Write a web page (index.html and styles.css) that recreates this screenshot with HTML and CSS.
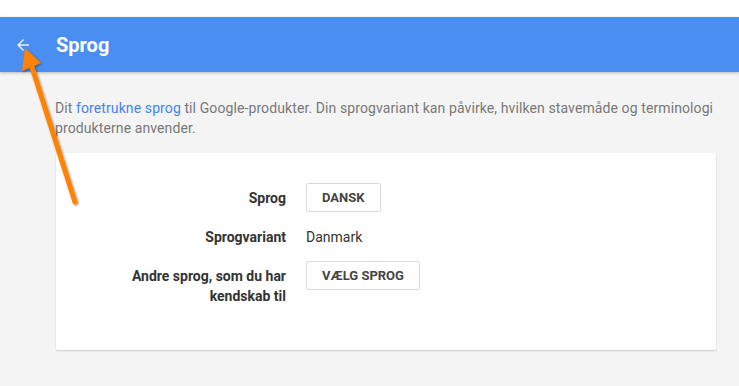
FILE: index.html
```html
<!DOCTYPE html>
<html>

<head>
	<title>Sprog</title>
	<link rel="stylesheet" href="styles.css">
</head>

<body>
	<div class="topbar">
		<a class="back" href="#">
			<svg width="18" height="18" viewBox="0 0 24 24"><path d="M20 11H7.83l5.59-5.59L12 4l-8 8 8 8 1.41-1.41L7.83 13H20v-2z" fill="#fff"/></svg>
		</a>
		<h1>Sprog</h1>
	</div>

	<div class="content">
		<p class="intro">Dit <a href="#">foretrukne sprog</a> til Google-produkter. Din sprogvariant kan påvirke, hvilken stavemåde og terminologi produkterne anvender.</p>

		<div class="card">
			<div class="row">
				<div class="label">Sprog</div>
				<div class="value"><button class="btn">Dansk</button></div>
			</div>
			<div class="row">
				<div class="label">Sprogvariant</div>
				<div class="value text">Danmark</div>
			</div>
			<div class="row">
				<div class="label">Andre sprog, som du har kendskab til</div>
				<div class="value"><button class="btn">Vælg sprog</button></div>
			</div>
		</div>
	</div>

	<!-- annotation arrow -->
	<svg class="pointer" width="100" height="220" viewBox="0 0 100 220">
		<defs>
			<filter id="sh" x="-50%" y="-50%" width="200%" height="200%">
				<feDropShadow dx="1" dy="1" stdDeviation="1" flood-color="#000" flood-opacity="0.45"/>
			</filter>
		</defs>
		<g filter="url(#sh)">
			<line x1="75" y1="202" x2="31" y2="64" stroke="#ff8200" stroke-width="5" stroke-linecap="round"/>
			<polygon points="25,48 22,71 41,63" fill="#ff8200"/>
		</g>
	</svg>
</body>

</html>
```

FILE: styles.css
```css
body {
	margin: 0;
	padding-top: 17px;
	background-color: #f4f4f4;
	font-family: Roboto, 'Liberation Sans', sans-serif;
	box-shadow: inset 0 17px 0 #fff;
	height: 369px;
	overflow: hidden;
}

.topbar {
	display: flex;
	align-items: center;
	height: 55px;
	background-color: #4a8ef1;
	box-shadow: 0 1px 3px rgba(0, 0, 0, 0.25);
}

.back {
	display: flex;
	width: 18px;
	margin-left: 14px;
	margin-right: 24px;
	opacity: 0.85;
}

.topbar h1 {
	margin: 0;
	font-size: 20px;
	font-weight: 700;
	color: white;
}

.content {
	width: 660px;
	margin-left: 56px;
}

.intro {
	margin: 26px 0 15px -1px;
	font-size: 14px;
	line-height: 20px;
	letter-spacing: 0.1px;
	color: #787878;
}

.intro a {
	color: #4285f4;
	text-decoration: none;
}

.card {
	display: flex;
	flex-direction: column;
	gap: 10px;
	padding: 30px 0 44px;
	background-color: white;
	border-radius: 2px;
	box-shadow: 0 1px 2px rgba(0, 0, 0, 0.18);
}

.row {
	display: flex;
	min-height: 29px;
}

.label {
	width: 160px;
	margin-left: 70px;
	padding-top: 5px;
	text-align: right;
	font-size: 14px;
	line-height: 20px;
	font-weight: 700;
	color: #333;
}

.value {
	margin-left: 20px;
}

.value.text {
	padding-top: 5px;
	font-size: 14px;
	line-height: 20px;
	color: #333;
}

.btn {
	height: 29px;
	padding: 0 15px;
	background-color: white;
	border: 1px solid #dadada;
	border-radius: 2px;
	font-family: Roboto, 'Liberation Sans', sans-serif;
	font-size: 13px;
	font-weight: 700;
	text-transform: uppercase;
	color: #444;
	cursor: pointer;
}

.pointer {
	position: absolute;
	left: 0;
	top: 0;
}
```
